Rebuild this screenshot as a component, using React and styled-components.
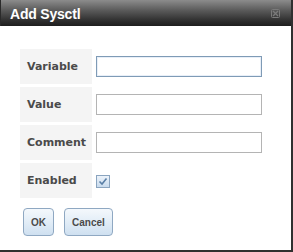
import React from "react";
import styled, { createGlobalStyle } from "styled-components";

const Global = createGlobalStyle`
  html, body { margin: 0; padding: 0; background: #fff; }
  body { font-family: "DejaVu Sans", Verdana, sans-serif; }
`;

const Dialog = styled.div`
  width: 293px;
  height: 252px;
  box-sizing: border-box;
  border-right: 2px solid #303030;
  border-bottom: 2px solid #303030;
  background: #fff;
  display: flex;
  flex-direction: column;
`;

const TitleBar = styled.div`
  height: 26px;
  flex: none;
  display: flex;
  align-items: center;
  justify-content: space-between;
  padding: 0 11px 0 10px;
  background: linear-gradient(to bottom, #8c8c8c 0%, #5a5a5a 40%, #2e2e2e 80%, #1e1e1e 100%);
  border-left: 1px solid #2a2a2a;
`;

const Title = styled.span`
  color: #fff;
  font-family: "Liberation Sans", Arial, sans-serif;
  font-weight: bold;
  font-size: 14px;
  letter-spacing: -0.2px;
  line-height: 1;
  margin-top: 1px;
  margin-left: -1px;
`;

const Body = styled.div`
  padding: 23px 0 0 20px;
  display: flex;
  flex-direction: column;
  gap: 10px;
`;

const Form = styled.div`
  display: grid;
  grid-template-columns: 72px auto;
  grid-auto-rows: 35px;
  row-gap: 3px;
`;

const Label = styled.div`
  background: #f4f4f4;
  display: flex;
  align-items: center;
  padding-left: 7px;
  font-weight: bold;
  font-size: 11px;
  color: #4a4a4a;
`;

const Field = styled.div`
  display: flex;
  align-items: center;
  padding-left: 4px;
`;

const Input = styled.input`
  width: 166px;
  height: 21px;
  box-sizing: border-box;
  margin: 0;
  padding: 1px 3px;
  font-family: inherit;
  font-size: 11px;
  background: #fff;
  outline: none;
  border: 1px solid ${p => (p.$focus ? "#7f9bb6" : "#b4b4b4")};
  box-shadow: ${p => (p.$focus ? "inset 0 0 0 1px #e8eff8" : "none")};
`;

const Buttons = styled.div`
  display: flex;
  gap: 10px;
  padding-left: 3px;
`;

const Button = styled.button`
  height: 28px;
  padding: 0 7px;
  box-sizing: border-box;
  border: 1px solid #8fa8c2;
  border-radius: 4px;
  background: linear-gradient(to bottom, #f4f8fc 0%, #e2edf7 50%, #cfe0f0 100%);
  font-family: "Liberation Sans", Arial, sans-serif;
  font-weight: bold;
  font-size: 10px;
  color: #4a4a4a;
  cursor: pointer;
`;

const CloseIcon = () => (
  <svg width="9" height="9" viewBox="0 0 9 9">
    <rect x="0.5" y="0.5" width="8" height="8" fill="none" stroke="#7a7a7a" strokeWidth="1" rx="1" />
    <path d="M2 2 L7 7 M7 2 L2 7" stroke="#7a7a7a" strokeWidth="1.3" />
  </svg>
);

const CheckBox = () => (
  <svg width="14" height="13" viewBox="0 0 14 13" style={{ marginTop: 1 }}>
    <defs>
      <linearGradient id="cbg" x1="0" y1="0" x2="0" y2="1">
        <stop offset="0" stopColor="#eef4fb" />
        <stop offset="1" stopColor="#c6d9ec" />
      </linearGradient>
    </defs>
    <rect x="0.5" y="0.5" width="13" height="12" fill="url(#cbg)" stroke="#8aa4bf" />
    <path d="M3.5 6.5 L6 9 L10.5 3.5" fill="none" stroke="#5a7fa6" strokeWidth="1.6" />
  </svg>
);

export default function App() {
  return (
    <>
      <Global />
      <Dialog>
        <TitleBar>
          <Title>Add Sysctl</Title>
          <CloseIcon />
        </TitleBar>
        <Body>
          <Form>
            <Label>Variable</Label>
            <Field><Input $focus /></Field>
            <Label>Value</Label>
            <Field><Input /></Field>
            <Label>Comment</Label>
            <Field><Input /></Field>
            <Label>Enabled</Label>
            <Field><CheckBox /></Field>
          </Form>
          <Buttons>
            <Button>OK</Button>
            <Button>Cancel</Button>
          </Buttons>
        </Body>
      </Dialog>
    </>
  );
}
